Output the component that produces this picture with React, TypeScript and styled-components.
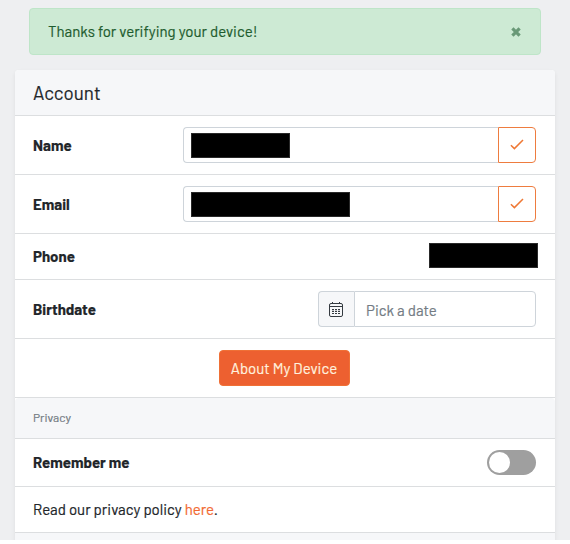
import React from 'react';
import styled, { createGlobalStyle } from 'styled-components';

const GlobalStyle = createGlobalStyle`
  *, *::before, *::after { box-sizing: border-box; }
  html { background: #fff; }
  body {
    margin: 0;
    color: #212529;
    font-family: Barlow, Roboto, 'Liberation Sans', sans-serif;
    font-size: 15px;
    line-height: 22px;
    -webkit-text-stroke: 0.2px currentColor;
    overflow: hidden;
  }
`;

const Page = styled.main`
  height: 540px;
  padding: 8px 15px 0 15px;
  background: #eeeff1;
  overflow: hidden;
`;

const Alert = styled.div`
  display: flex;
  align-items: center;
  justify-content: space-between;
  height: 47px;
  margin: 0 14px 15px;
  padding: 0 19px 0 18px;
  border: 1px solid #bee5c8;
  border-radius: 4px;
  background: #cdead4;
  color: #1e5c2e;
`;

const CloseButton = styled.button`
  display: flex;
  margin: 1px 0 0;
  padding: 0;
  border: 0;
  background: none;
  color: #699977;
`;

const Card = styled.section`
  height: 480px;
  border-radius: 4px 4px 0 0;
  background: #fff;
  box-shadow: 0 2px 4px rgba(0, 0, 0, 0.075);
`;

const Row = styled.div<{ $height: number; $center?: boolean }>`
  display: flex;
  align-items: center;
  justify-content: ${(p) => (p.$center ? 'center' : 'space-between')};
  height: ${(p) => p.$height}px;
  padding: 0 19px 0 18px;
  border-bottom: 1px solid #dcdee0;
`;

const Header = styled(Row)`
  border-radius: 4px 4px 0 0;
  background: #f6f7f9;
`;

const Footer = styled.div`
  height: 7px;
  background: #f6f7f9;
`;

const Title = styled.h1`
  margin: 0;
  font-size: 18.75px;
  font-weight: 400;
`;

const Text = styled.span`
  padding-bottom: 1px;
`;

const Label = styled.label`
  padding-bottom: 1px;
  font-weight: 700;
`;

const Small = styled.h2`
  margin: 0;
  padding-bottom: 2px;
  color: #727a82;
  font-size: 12px;
  font-weight: 400;
`;

const InputGroup = styled.div<{ $width: number }>`
  display: flex;
  width: ${(p) => p.$width}px;
  height: 36px;
`;

const ValueField = styled.div`
  display: flex;
  flex: 1;
  align-items: center;
  padding: 0 7px;
  border: 1px solid #ced4da;
  border-right: 0;
  border-radius: 4px 0 0 4px;
`;

const Redaction = styled.span<{ $width: number; $end?: boolean }>`
  width: ${(p) => p.$width}px;
  height: 25px;
  margin-right: ${(p) => (p.$end ? -2 : 0)}px;
  margin-top: ${(p) => (p.$end ? -3 : 0)}px;
  border: 1px solid #292929;
  background: #000;
`;

const ConfirmButton = styled.button`
  display: flex;
  align-items: center;
  justify-content: center;
  width: 38px;
  padding: 0;
  border: 1px solid #ee7c3f;
  border-radius: 0 4px 4px 0;
  background: #fff;
  color: #ef7834;
`;

const DateIcon = styled.div`
  display: flex;
  align-items: center;
  justify-content: center;
  width: 36px;
  padding-right: 1px;
  border: 1px solid #ced4da;
  border-right: 0;
  border-radius: 4px 0 0 4px;
  background: #f6f7f9;
  color: #343a40;
`;

const DateField = styled.div`
  display: flex;
  flex: 1;
  align-items: center;
  padding: 3px 11px 0;
  border: 1px solid #ced4da;
  border-radius: 0 4px 4px 0;
  color: #737b83;
`;

const PrimaryButton = styled.button`
  width: 131px;
  height: 36px;
  margin-left: -1px;
  padding: 0;
  border: 1px solid #ef7036;
  border-radius: 4px;
  background: #ed6030;
  color: #fff1df;
  font: inherit;
  white-space: nowrap;
`;

const Switch = styled.button`
  display: flex;
  align-items: center;
  width: 49px;
  height: 25px;
  padding: 0 2px;
  border: 0;
  border-radius: 13px;
  background: #9f9f9f;
`;

const Thumb = styled.span`
  width: 21px;
  height: 21px;
  border-radius: 50%;
  background: #fff;
`;

const Link = styled.a`
  color: #f26a32;
  text-decoration: none;
`;

const Check = () => (
  <svg width="16" height="16" viewBox="0 0 16 16" fill="none" stroke="currentColor" strokeWidth="1.5">
    <path d="M1.9 8.2 5.4 11.6 14 3" />
  </svg>
);

const Close = () => (
  <svg width="10" height="10" viewBox="0 0 10 10" fill="none" stroke="currentColor" strokeWidth="3.2">
    <path d="m1.4 1.4 7.2 7.2m0-7.2L1.4 8.6" />
  </svg>
);

const Calendar = () => (
  <svg width="16" height="17" viewBox="0 0 16 17" fill="none" stroke="currentColor">
    <rect x="1.5" y="2.5" width="13" height="13" rx="1.5" />
    <path d="M1.5 5.5h13M4.5 1v2M11.5 1v2" />
    <path d="M4 8.7h8M4 10.5h8M4 12.5h8" strokeWidth="1.2" strokeDasharray="2 1" />
  </svg>
);

const fields = [
  { label: 'Name', hidden: 99 },
  { label: 'Email', hidden: 159 },
];

export default function App() {
  return (
    <>
      <GlobalStyle />
      <Page>
        <Alert role="alert">
          <Text>Thanks for verifying your device!</Text>
          <CloseButton aria-label="Close"><Close /></CloseButton>
        </Alert>
        <Card>
          <Header $height={46}><Title>Account</Title></Header>
          {fields.map((field) => (
            <Row key={field.label} $height={59}>
              <Label>{field.label}</Label>
              <InputGroup $width={353}>
                <ValueField><Redaction $width={field.hidden} /></ValueField>
                <ConfirmButton aria-label="Save"><Check /></ConfirmButton>
              </InputGroup>
            </Row>
          ))}
          <Row $height={46}>
            <Label>Phone</Label>
            <Redaction $width={109} $end />
          </Row>
          <Row $height={59}>
            <Label>Birthdate</Label>
            <InputGroup $width={218}>
              <DateIcon><Calendar /></DateIcon>
              <DateField><Text>Pick a date</Text></DateField>
            </InputGroup>
          </Row>
          <Row $height={59} $center>
            <PrimaryButton><Text>About My Device</Text></PrimaryButton>
          </Row>
          <Header as="div" $height={41}><Small>Privacy</Small></Header>
          <Row $height={48}>
            <Label>Remember me</Label>
            <Switch role="switch" aria-checked={false} aria-label="Remember me"><Thumb /></Switch>
          </Row>
          <Row $height={46}>
            <Text>Read our privacy policy <Link href="#">here</Link>.</Text>
          </Row>
          <Footer />
        </Card>
      </Page>
    </>
  );
}
